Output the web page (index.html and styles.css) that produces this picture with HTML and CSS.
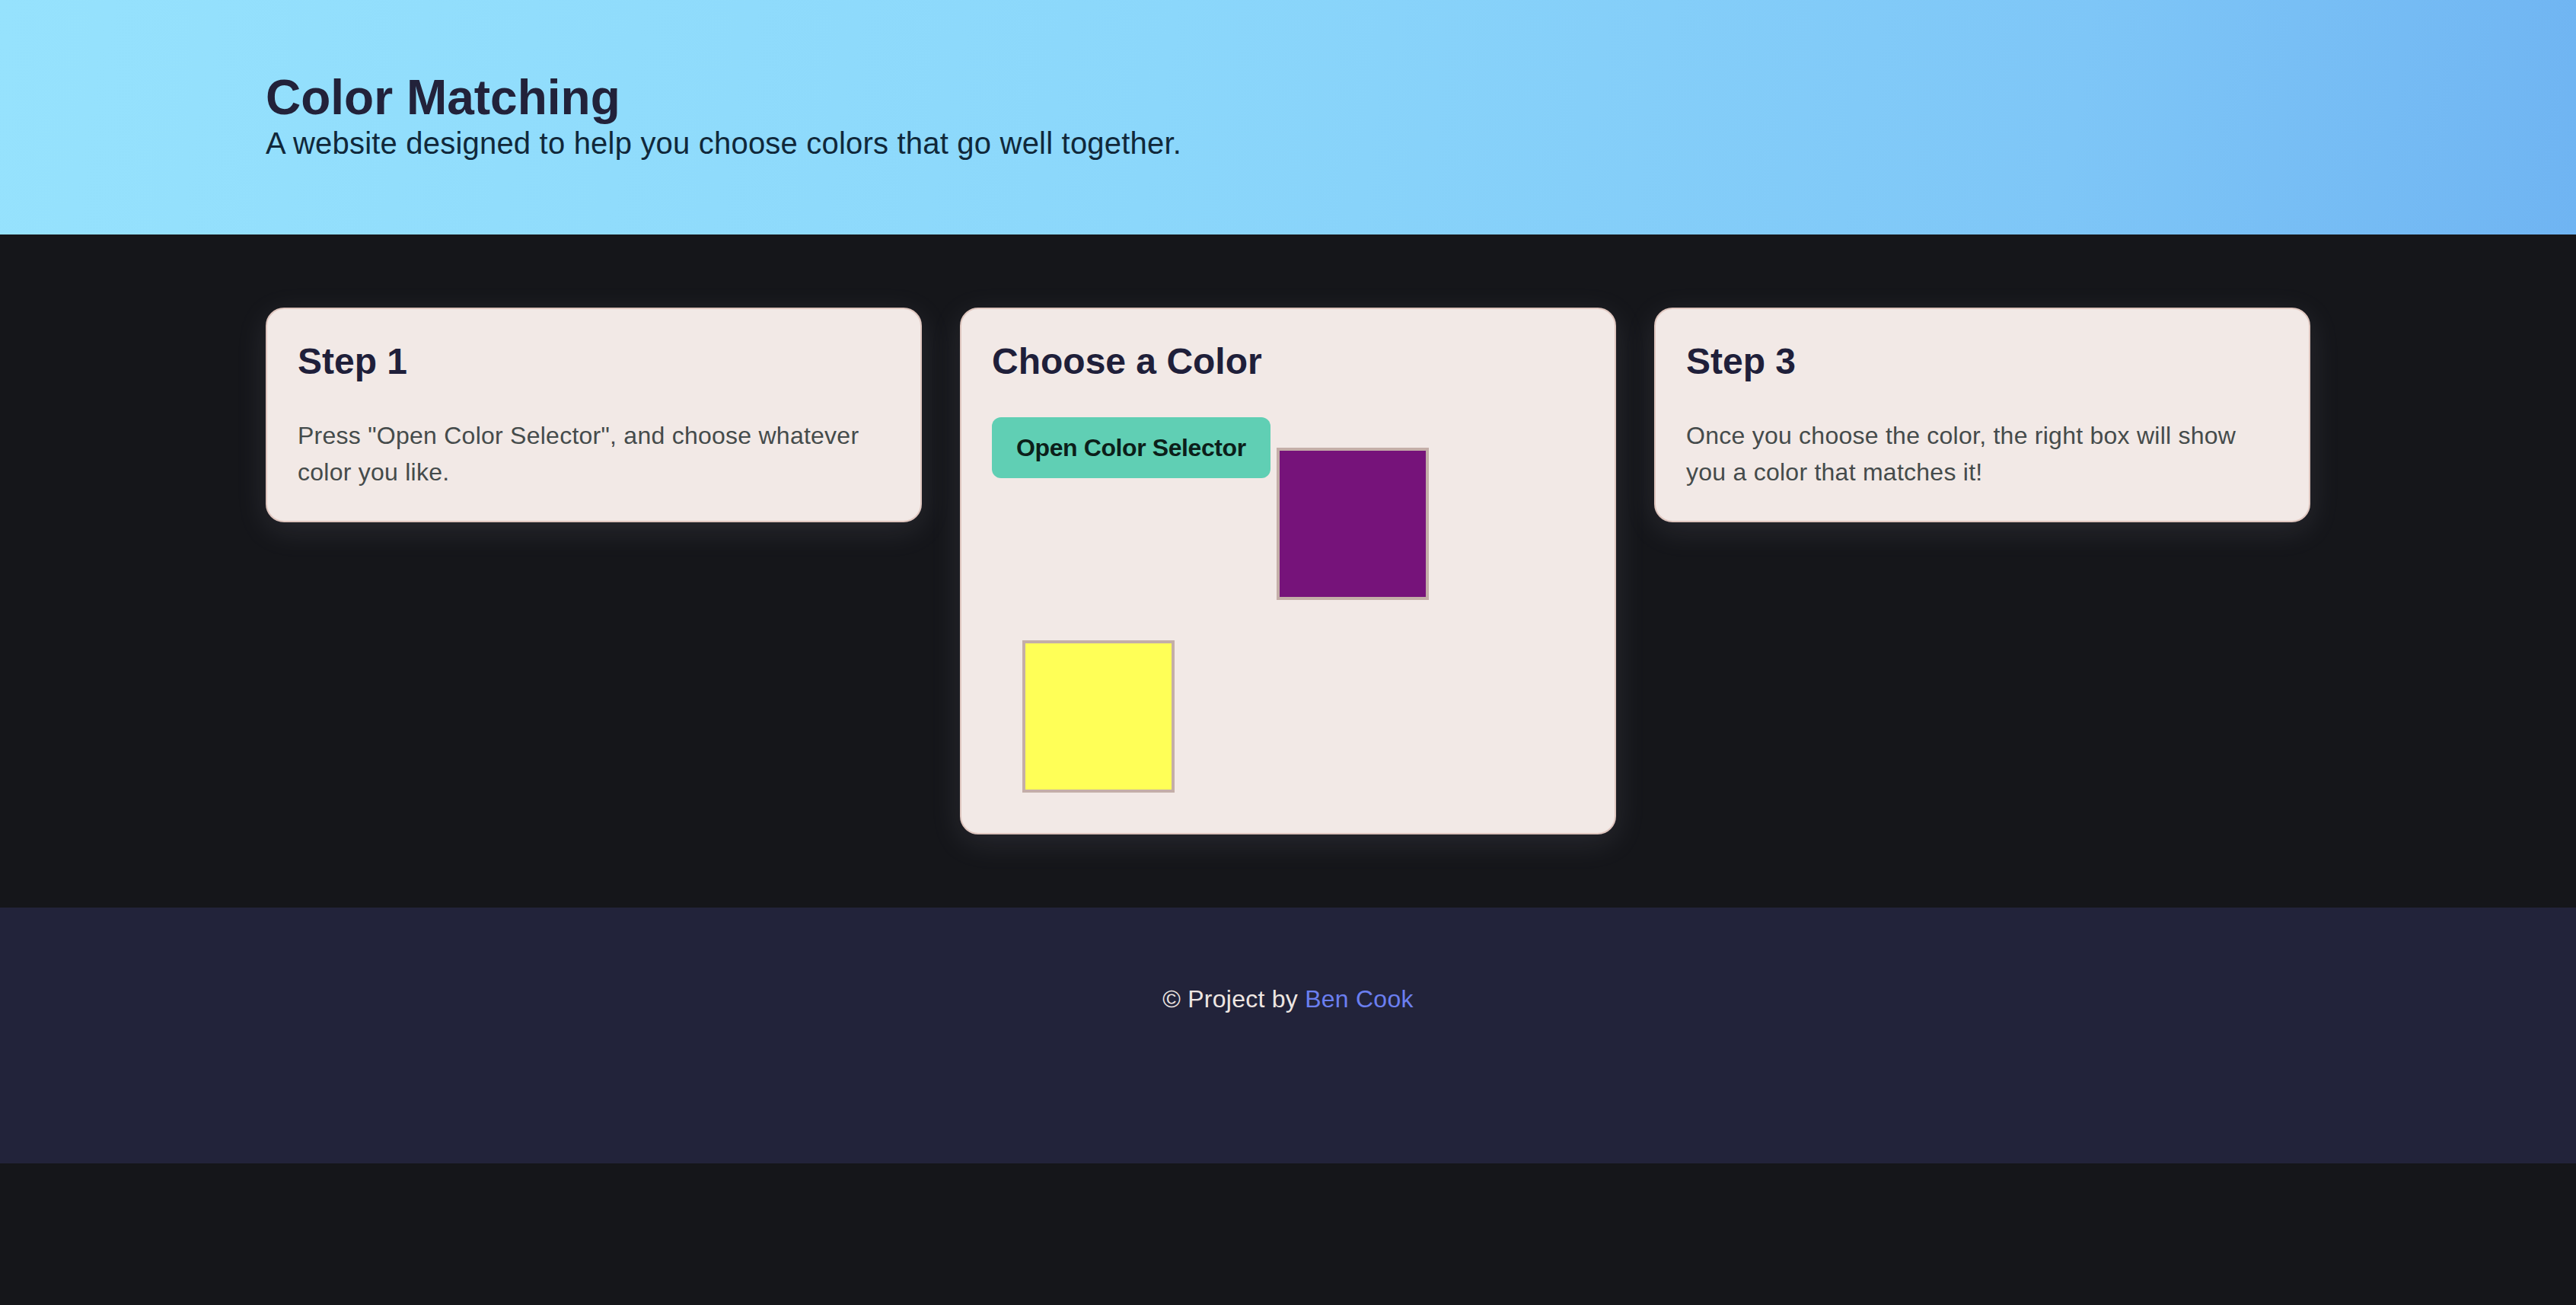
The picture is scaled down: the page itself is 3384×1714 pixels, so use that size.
FILE: index.html
```html
<!DOCTYPE html>
<html lang="en">
<head>
<meta charset="utf-8">
<title>Color Matching</title>
<link rel="stylesheet" href="styles.css">
</head>
<body>
<header class="site-header">
  <div class="container">
    <h1 class="site-title">Color Matching</h1>
    <p class="site-tagline">A website designed to help you choose colors that go well together.</p>
  </div>
</header>
<main class="site-main">
  <div class="container cards">
    <section class="card">
      <h2 class="card-title">Step 1</h2>
      <p class="card-text">Press "Open Color Selector", and choose whatever color you like.</p>
    </section>
    <section class="card">
      <h2 class="card-title">Choose a Color</h2>
      <div class="picker-row">
        <button class="picker-btn" type="button">Open Color Selector</button>
        <div class="swatch swatch-match"></div>
      </div>
      <div class="swatch swatch-chosen"></div>
    </section>
    <section class="card">
      <h2 class="card-title">Step 3</h2>
      <p class="card-text">Once you choose the color, the right box will show you a color that matches it!</p>
    </section>
  </div>
</main>
<footer class="site-footer">
  <p class="footer-text">© Project by <a class="footer-link" href="#">Ben Cook</a></p>
</footer>
</body>
</html>
```

FILE: styles.css
```css
* {
  box-sizing: border-box;
}

html, body {
  margin: 0;
  padding: 0;
}

body {
  background: #15161a;
  font-family: "Liberation Sans", Arial, Helvetica, sans-serif;
  color: #20203a;
}

.container {
  width: 2686px;
  margin: 0 auto;
}

.site-header {
  background: linear-gradient(100deg, #96e2fd 0%, #8bd7fb 45%, #7ec6f7 80%, #6fb4f2 100%);
  padding: 96px 0 92px;
}

.site-title {
  margin: 0;
  font-size: 64px;
  line-height: 64px;
  font-weight: 700;
  color: #22223a;
}

.site-tagline {
  margin: 0;
  font-size: 40px;
  line-height: 56px;
  letter-spacing: 0.2px;
  color: #10283a;
}

.site-main {
  padding: 96px 0;
}

.cards {
  display: grid;
  grid-template-columns: repeat(3, 1fr);
  gap: 50px;
  align-items: start;
}

.card {
  background: #f2e9e6;
  border: 2px solid #dfc6bf;
  border-radius: 24px;
  padding: 40px;
  box-shadow: 0 10px 40px rgba(190, 190, 210, 0.12);
}

.card-title {
  margin: 0 0 44px;
  font-size: 48px;
  line-height: 58px;
  font-weight: 700;
  color: #1f1f3a;
}

.card-text {
  margin: 0;
  font-size: 32px;
  line-height: 48px;
  letter-spacing: 0.25px;
  color: #454b4b;
}

.picker-row {
  display: flex;
  align-items: flex-start;
  gap: 8px;
}

.picker-btn {
  background: #60cfb4;
  color: #0c1f1a;
  border: none;
  border-radius: 12px;
  padding: 16px 32px;
  font-family: "Liberation Sans", Arial, Helvetica, sans-serif;
  font-size: 32px;
  line-height: 48px;
  font-weight: 700;
  letter-spacing: -0.4px;
  cursor: pointer;
}

.swatch {
  width: 200px;
  height: 200px;
  border: 4px solid #c4aea8;
}

.swatch-match {
  background: #76137a;
  margin-top: 40px;
}

.swatch-chosen {
  background: #ffff57;
  margin: 53px 0 13px 40px;
}

.site-footer {
  background: #22233a;
  padding: 96px 0 192px;
}

.footer-text {
  margin: 0;
  text-align: center;
  font-size: 32px;
  line-height: 48px;
  letter-spacing: 0.25px;
  color: #eee6e2;
}

.footer-link {
  color: #6b7ff0;
  text-decoration: none;
}
```
